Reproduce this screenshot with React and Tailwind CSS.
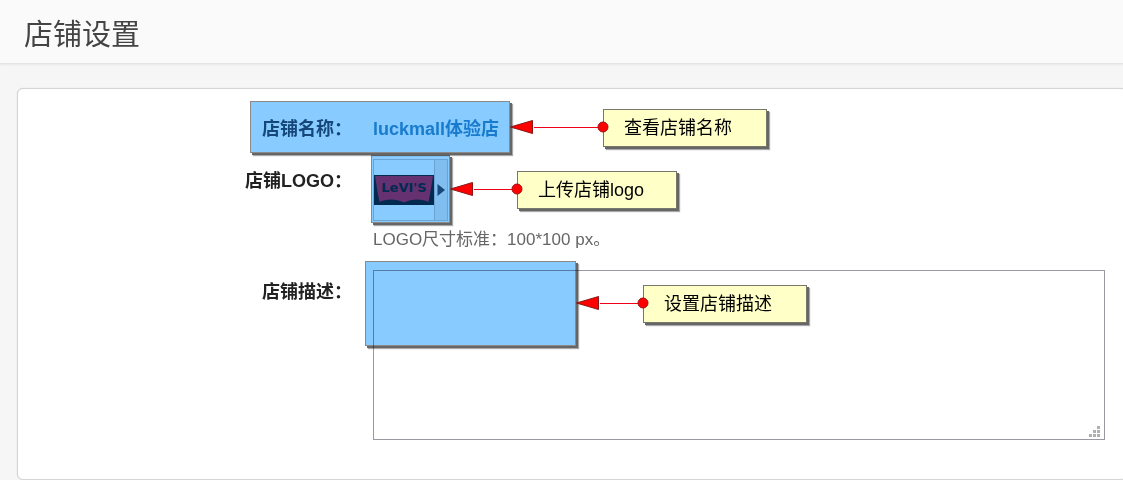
import React from "react";

function Highlight({ className, children }) {
  return (
    <div className={`pointer-events-none absolute ${className}`}>
      <div className="absolute inset-0 border border-[#8a8a8a] bg-[#88ccff] mix-blend-multiply shadow-[2px_2px_0_#666,3px_3px_1px_#aaa]" />
      {children}
    </div>
  );
}

function Callout({ className, arrowClass, noteClass, children }) {
  return (
    <div className={`absolute left-full z-10 flex items-start ${className}`}>
      <div className={`relative mt-2 flex h-5 shrink-0 items-center ${arrowClass}`}>
        <svg className="h-4 w-6 shrink-0" viewBox="0 0 24 16" aria-hidden="true">
          <path d="M0.5 8L22.5 1.5v13z" fill="#ff0000" stroke="#8b1515" strokeWidth="1" />
        </svg>
        <div className="h-px grow bg-[#f00018]" />
        <svg className="absolute -right-1.5 z-10 h-3 w-3" viewBox="0 0 12 12" aria-hidden="true">
          <circle cx="6" cy="6" r="5" fill="#ff0000" stroke="#a01010" strokeWidth="1" />
        </svg>
      </div>
      <div
        className={`h-[38px] shrink-0 whitespace-nowrap border border-[#77776b] bg-[#ffffc8] pl-5 text-lg leading-9 text-black shadow-[2px_2px_0_#666,3px_3px_1px_#aaa] ${noteClass}`}
      >
        {children}
      </div>
    </div>
  );
}

function BatwingLogo() {
  return (
    <svg className="h-[30px] w-[60px]" viewBox="0 0 60 30" role="img" aria-label="Levi's">
      <rect width="60" height="30" fill="#003450" />
      <path
        d="M1 1H59C57.5 10 56.5 18 54.5 27C48 23.5 38 23.5 30 27.5C22 23.5 12 23.5 5.5 27C3.5 18 2.5 10 1 1Z"
        fill="#be3d70"
      />
      <text
        x="30"
        y="17"
        textAnchor="middle"
        fontFamily="DejaVu Sans, sans-serif"
        fontWeight="bold"
        fontSize="13"
        fill="#003450"
      >
        LeVI'S
      </text>
    </svg>
  );
}

export default function App() {
  return (
    <div className="overflow-hidden bg-[#f6f6f6] font-['Liberation_Sans','Noto_Sans_CJK_SC',sans-serif] text-[#333]">
      <header className="border-b border-[#e4e4e4] bg-[#fafafa] px-6 pt-[14px] pb-[6px] shadow-[0_1px_2px_#e6e6e6]">
        <h1 className="text-[29px] leading-[43px] font-normal text-[#444]">店铺设置</h1>
      </header>

      <main className="pt-6 pl-[17px]">
        <form className="-mr-1 rounded-md border border-[#d4d4d4] bg-white pt-3 pr-[21px] pb-[39px] pl-px shadow-[0_0_1px_#ccc]">
          <div className="relative grid h-[54px] grid-cols-[333px_1fr] items-center gap-x-[21px] pt-0.5 text-lg">
            <span className="text-right font-bold text-[#28587a]">店铺名称：</span>
            <a href="#shop" className="font-bold text-[#2f9acd]">
              luckmall体验店
            </a>
            <Highlight className="top-0 left-[231px] h-[52px] w-[260px]">
              <Callout className="top-2" arrowClass="w-[93px]" noteClass="w-[164px]">
                查看店铺名称
              </Callout>
            </Highlight>
          </div>

          <div className="grid grid-cols-[333px_1fr] gap-x-[21px]">
            <label htmlFor="logo" className="pt-3 text-right text-lg font-bold text-[#222]">
              店铺LOGO：
            </label>
            <div>
              <div className="relative w-20">
                <button
                  id="logo"
                  type="button"
                  className="mt-1 flex h-[62px] w-[75px] items-stretch border border-[#c9cdd2] bg-white"
                >
                  <span className="flex items-center">
                    <BatwingLogo />
                  </span>
                  <span className="flex grow items-center justify-center border-l border-[#c9cdd2] bg-[#eeeeee]">
                    <svg className="h-3 w-2" viewBox="0 0 8 12" aria-hidden="true">
                      <path d="M0.5 0L8 6L0.5 12z" fill="#285878" />
                    </svg>
                  </span>
                </button>
                <Highlight className="-top-1 -left-0.5 h-[68px] w-[79px]">
                  <Callout className="top-4" arrowClass="w-[67px]" noteClass="w-[160px]">
                    上传店铺logo
                  </Callout>
                </Highlight>
              </div>
              <p className="mt-[7px] text-[17px] leading-6 text-[#666]">LOGO尺寸标准：100*100 px。</p>
            </div>
          </div>

          <div className="mt-[18px] grid grid-cols-[333px_1fr] gap-x-[21px]">
            <label htmlFor="desc" className="pt-2 text-right text-lg font-bold text-[#222]">
              店铺描述：
            </label>
            <div className="relative">
              <textarea
                id="desc"
                className="block h-[170px] w-full resize-none border border-[#999ba3] bg-white p-2 text-base outline-none"
              />
              <svg className="absolute right-1 bottom-0.5 h-3 w-3" viewBox="0 0 12 12" fill="#b0b0b0" aria-hidden="true">
                <path d="M8 0h3v3H8zM4 4h3v3H4zM8 4h3v3H8zM0 8h3v3H0zM4 8h3v3H4zM8 8h3v3H8z" />
              </svg>
              <Highlight className="-top-[9px] -left-2 h-[85px] w-[211px]">
                <Callout className="top-6" arrowClass="w-[67px]" noteClass="w-[164px]">
                  设置店铺描述
                </Callout>
              </Highlight>
            </div>
          </div>
        </form>
      </main>
    </div>
  );
}
